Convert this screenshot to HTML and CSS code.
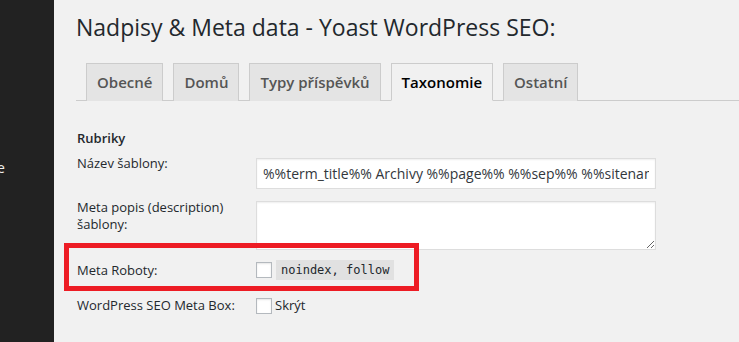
FILE: index.html
```html
<!DOCTYPE html>
<html lang="cs">
<head>
<meta charset="utf-8">
<title>Nadpisy &amp; Meta data - Yoast WordPress SEO</title>
<link rel="stylesheet" href="styles.css">
</head>
<body>
<div class="app">
  <aside class="sidebar">
    <span class="menu-item">e</span>
  </aside>
  <main class="content">
    <h1 class="title">Nadpisy &amp; Meta data - Yoast WordPress SEO:</h1>
    <nav class="tabs">
      <a class="tab">Obecné</a>
      <a class="tab">Domů</a>
      <a class="tab">Typy příspěvků</a>
      <a class="tab tab-active">Taxonomie</a>
      <a class="tab">Ostatní</a>
    </nav>
    <section class="settings">
      <h3 class="section-title">Rubriky</h3>
      <div class="row row-title">
        <label class="row-label">Název šablony:</label>
        <input class="text-input" type="text" value="%%term_title%% Archivy %%page%% %%sep%% %%sitename%%">
      </div>
      <div class="row row-desc">
        <label class="row-label">Meta popis (description) šablony:</label>
        <textarea class="text-area"></textarea>
      </div>
      <div class="row row-check row-robots">
        <label class="row-label">Meta Roboty:</label>
        <div class="field">
          <span class="checkbox"></span>
          <code class="code">noindex, follow</code>
        </div>
      </div>
      <div class="row row-check row-metabox">
        <label class="row-label">WordPress SEO Meta Box:</label>
        <div class="field">
          <span class="checkbox"></span>
          <span class="check-text">Skrýt</span>
        </div>
      </div>
    </section>
  </main>
  <div class="highlight"></div>
</div>
</body>
</html>
```

FILE: styles.css
```css
* { box-sizing: border-box; }

html, body {
  margin: 0;
  padding: 0;
  height: 100%;
  overflow: hidden;
  background: #f1f1f1;
  font-family: "Open Sans", "Noto Sans", sans-serif;
  color: #444;
}

.app {
  position: relative;
  display: flex;
  width: 739px;
  height: 342px;
}

.sidebar {
  width: 54px;
  flex: 0 0 54px;
  background: #222;
  overflow: hidden;
  padding-top: 159px;
}

.menu-item {
  display: block;
  margin-left: -3px;
  color: #eee;
  font-size: 14px;
  line-height: 18px;
}

.content {
  flex: 1;
  padding-left: 22px;
  min-width: 0;
}

.title {
  margin: 11px 0 0 0;
  font-size: 23px;
  font-weight: 400;
  line-height: 32px;
  color: #23282d;
}

.tabs {
  display: flex;
  margin-top: 20px;
  border-bottom: 1px solid #ccc;
  height: 38px;
  align-items: flex-end;
}

.tab {
  display: block;
  margin-left: 10px;
  height: 38px;
  padding: 6px 10px 0;
  line-height: 24px;
  font-size: 15px;
  font-weight: 600;
  color: #555;
  background: #e4e4e4;
  border: 1px solid #ccc;
  border-bottom: none;
  margin-bottom: -1px;
}

.tab-active {
  background: #f1f1f1;
  color: #000;
  height: 38px;
  border-bottom: 1px solid #f1f1f1;
}

.settings {
  padding-top: 29px;
}

.section-title {
  margin: 0 0 0 1px;
  font-size: 13px;
  font-weight: 600;
  line-height: 17px;
  color: #23282d;
}

.row {
  display: grid;
  grid-template-columns: 180px 400px;
  align-items: start;
}

.row-label {
  padding-left: 1px;
  font-size: 13px;
  line-height: 17px;
  color: #23282d;
}

.row-title { margin-top: 8px; }
.row-title .text-input { margin-top: 3px; }

.text-input {
  width: 400px;
  height: 31px;
  padding: 0 6px;
  border: 1px solid #ddd;
  background: #fff;
  box-shadow: inset 0 1px 2px rgba(0,0,0,.07);
  font-family: "Open Sans", "Noto Sans", sans-serif;
  font-size: 14px;
  color: #32373c;
  outline: none;
}

.row-desc { margin-top: 10px; }
.row-desc .row-label { width: 160px; }
.row-desc .text-area { margin-top: 2px; }

.text-area {
  display: block;
  width: 400px;
  height: 49px;
  border: 1px solid #ddd;
  background: #fff;
  box-shadow: inset 0 1px 2px rgba(0,0,0,.07);
  margin: 0;
}

.row-check { align-items: center; }
.row-robots { margin-top: 10px; height: 20px; }
.row-metabox { margin-top: 17px; height: 17px; }

.field {
  display: flex;
  align-items: center;
}

.checkbox {
  display: block;
  width: 16px;
  height: 16px;
  border: 1px solid #b4b9be;
  background: #fff;
  box-shadow: inset 0 1px 2px rgba(0,0,0,.1);
}

.code {
  margin-left: 4px;
  height: 20px;
  padding: 0 5px;
  background: #e1e1e1;
  font-family: "DejaVu Sans Mono", "Liberation Mono", monospace;
  font-size: 12px;
  line-height: 20px;
  color: #23282d;
}

.check-text {
  margin-left: 3px;
  font-size: 13px;
  line-height: 17px;
  color: #23282d;
}

.highlight {
  position: absolute;
  left: 64px;
  top: 243px;
  width: 355px;
  height: 48px;
  border: 5px solid #ed1c24;
  pointer-events: none;
}
```
